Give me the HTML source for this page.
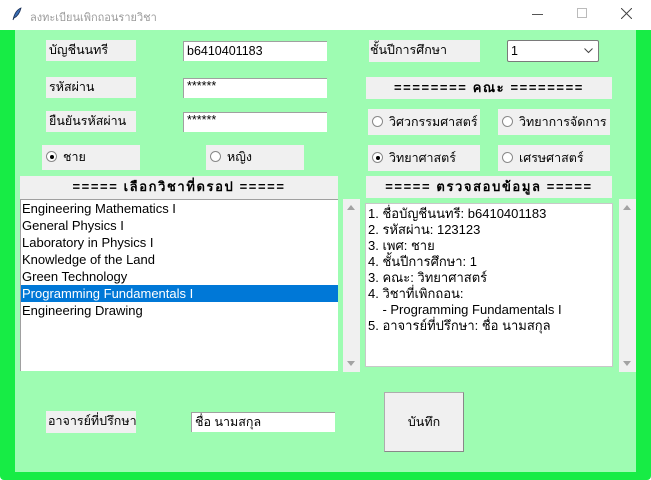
<!DOCTYPE html>
<html><head><meta charset="utf-8"><style>
*{margin:0;padding:0;box-sizing:border-box}
body{width:651px;height:480px;overflow:hidden;background:#fff;font-family:"Liberation Sans","Noto Sans CJK SC",sans-serif;font-size:12px;color:#000;position:relative}
.a{position:absolute}
.lab{position:absolute;background:#f0f0f0;padding-left:3px;line-height:21px;font-size:12.5px;white-space:nowrap}
.ent{position:absolute;background:#fff;border-top:1px solid #a0a0a0;border-left:1px solid #a0a0a0;padding-left:3px;font-size:12.5px;line-height:18px;white-space:nowrap}
.hdr{position:absolute;background:#f0f0f0;text-align:center;font-weight:bold;font-size:13px;line-height:22px;white-space:nowrap;letter-spacing:1.6px}
.rad{position:absolute;background:#f0f0f0;font-size:12.5px;line-height:25px;white-space:nowrap}
.rad i{display:inline-block;width:11px;height:11px;border:1px solid #888;border-radius:50%;background:#fff;vertical-align:-1px;margin:0 6px 0 4px;position:relative}
.rad i.on:after{content:"";position:absolute;left:2.5px;top:2.5px;width:4px;height:4px;border-radius:50%;background:#000}
.sb{position:absolute;background:#f0f0f0}
.sb .u,.sb .d{position:absolute;left:4px;width:0;height:0;border-left:4.5px solid transparent;border-right:4.5px solid transparent}
.sb .u{top:6px;border-bottom:5px solid #a3a3a3}
.sb .d{bottom:6px;border-top:5px solid #a3a3a3}
.lb div{height:17px;line-height:17px;padding-left:1px;font-size:13px;white-space:nowrap}
.tx div{height:16px;line-height:16px;padding-left:2px;font-size:13px;white-space:nowrap}
</style></head><body>
<div class="a" style="left:0;top:0;width:651px;height:30px;background:#fff"></div>
<svg class="a" style="left:12px;top:7px" width="10" height="14" viewBox="0 0 10 14"><path d="M1 13 C2 8 4 3 9 1 C8 5 6 9 2 11 Z" fill="#3a6fb5" stroke="#1a2f55" stroke-width="0.8"/></svg>
<div class="a" style="left:30px;top:8px;font-size:11px;color:#9a9a9a">ลงทะเบียนเพิกถอนรายวิชา</div>
<div class="a" style="left:532px;top:14px;width:11px;height:1px;background:#555"></div>
<div class="a" style="left:577px;top:8px;width:10px;height:10px;border:1px solid #bbb"></div>
<svg class="a" style="left:621px;top:8px" width="11" height="11"><path d="M0 0L11 11M11 0L0 11" stroke="#444" stroke-width="1"/></svg>
<div class="a" style="left:0;top:30px;width:651px;height:450px;background:#17ec45;border-bottom-left-radius:4px;border-bottom-right-radius:4px"></div>
<div class="a" style="left:15px;top:30px;width:621px;height:442px;background:#9efcb2"></div>

<div class="lab" style="left:46px;top:40px;width:90px">บัญชีนนทรี</div>
<div class="ent" style="left:183px;top:41px;width:144px;height:20px">b6410401183</div>
<div class="lab" style="left:46px;top:77px;width:90px">รหัสผ่าน</div>
<div class="ent" style="left:183px;top:78px;width:144px;height:20px;line-height:14px">******</div>
<div class="lab" style="left:46px;top:111px;width:90px">ยืนยันรหัสผ่าน</div>
<div class="ent" style="left:183px;top:112px;width:144px;height:20px;line-height:14px">******</div>
<div class="rad" style="left:42px;top:145px;width:98px"><i class="on"></i>ชาย</div>
<div class="rad" style="left:206px;top:145px;width:98px"><i></i>หญิง</div>
<div class="hdr" style="left:20px;top:176px;width:318px;height:23px">===== เลือกวิชาที่ดรอป =====</div>
<div class="a lb" style="left:20px;top:199px;width:318px;height:172px;background:#fff;border-top:1px solid #a0a0a0;border-left:1px solid #a0a0a0">
<div>Engineering Mathematics I</div><div>General Physics I</div><div>Laboratory in Physics I</div><div>Knowledge of the Land</div><div>Green Technology</div><div style="background:#0078d7;color:#fff">Programming Fundamentals I</div><div>Engineering Drawing</div></div>
<div class="sb" style="left:343px;top:199px;width:17px;height:173px"><span class="u"></span><span class="d"></span></div>

<div class="lab" style="left:369px;top:40px;width:111px;height:22px;padding-left:1px">ชั้นปีการศึกษา</div>
<div class="a" style="left:507px;top:40px;width:92px;height:22px;background:#fff;border:1px solid #7a7a7a;border-radius:2px;padding-left:3px;line-height:20px;font-size:12.5px">1</div>
<svg class="a" style="left:584px;top:48px" width="9" height="6"><path d="M0.5 0.5L4.5 4.5L8.5 0.5" stroke="#444" fill="none"/></svg>
<div class="hdr" style="left:366px;top:77px;width:246px">======== คณะ ========</div>
<div class="rad" style="left:368px;top:109px;width:112px;line-height:26px"><i></i>วิศวกรรมศาสตร์</div>
<div class="rad" style="left:498px;top:109px;width:112px;line-height:26px"><i></i>วิทยาการจัดการ</div>
<div class="rad" style="left:368px;top:145px;width:112px;line-height:26px"><i class="on"></i>วิทยาศาสตร์</div>
<div class="rad" style="left:498px;top:145px;width:112px;line-height:26px"><i></i>เศรษศาสตร์</div>
<div class="hdr" style="left:366px;top:176px;width:246px">===== ตรวจสอบข้อมูล =====</div>
<div class="a tx" style="left:365px;top:203px;width:248px;height:164px;background:#fff;border:1px solid #c8c8c8;padding-top:2px">
<div>1. ชื่อบัญชีนนทรี: b6410401183</div><div>2. รหัสผ่าน: 123123</div><div>3. เพศ: ชาย</div><div>4. ชั้นปีการศึกษา: 1</div><div>3. คณะ: วิทยาศาสตร์</div><div>4. วิชาที่เพิกถอน:</div><div>&nbsp;&nbsp;&nbsp;&nbsp;- Programming Fundamentals I</div><div>5. อาจารย์ที่ปรึกษา: ชื่อ นามสกุล</div></div>
<div class="sb" style="left:619px;top:199px;width:17px;height:173px"><span class="u"></span><span class="d"></span></div>

<div class="lab" style="left:46px;top:411px;width:90px;height:22px;padding-left:2px">อาจารย์ที่ปรึกษา</div>
<div class="ent" style="left:191px;top:412px;width:144px;height:20px">ชื่อ นามสกุล</div>
<div class="a" style="left:384px;top:392px;width:80px;height:60px;background:#f0f0f0;border:1px solid #adadad;border-right-color:#888;border-bottom-color:#888;text-align:center;line-height:58px;font-size:12.5px">บันทึก</div>
</body></html>
